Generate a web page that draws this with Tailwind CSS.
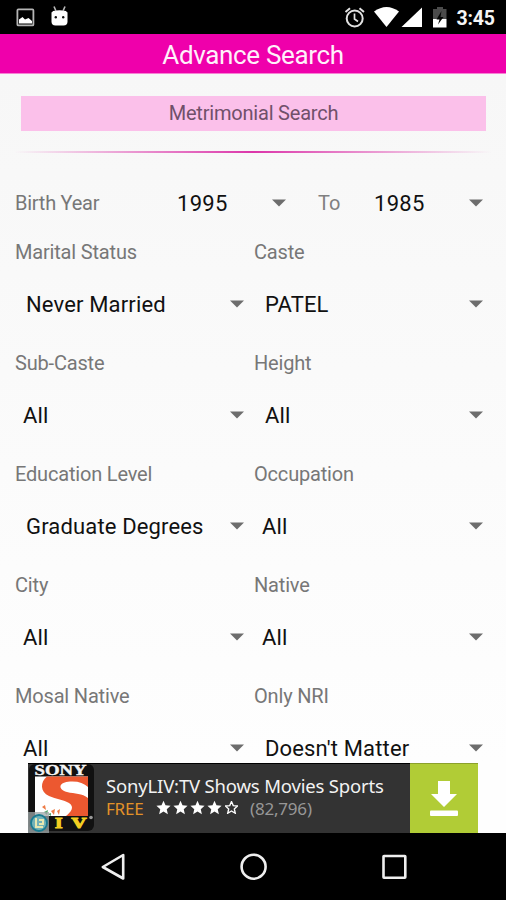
<!DOCTYPE html>
<html lang="en">
<head>
<meta charset="utf-8">
<meta name="viewport" content="width=device-width, initial-scale=1">
<title>Advance Search</title>
<script src="https://cdn.jsdelivr.net/npm/@tailwindcss/browser@4"></script>
</head>
<body class="w-[506px] h-[900px] overflow-hidden bg-black font-['Roboto',sans-serif]">
<svg class="hidden">
  <symbol id="caret" viewBox="0 0 14 8"><path d="M0 0.5H14L7 7.5Z" fill="#6d6d6d"/></symbol>
  <symbol id="star" viewBox="0 0 24 24"><path d="M12 1l3.2 7.5 8.1.7-6.1 5.4 1.8 8L12 18.400l-7 4.200 1.800-8L.7 9.200l8.100-.7z"/></symbol>
</svg>
<div class="flex flex-col h-[900px]">
  <header class="h-[34px] shrink-0 bg-black flex items-center text-white">
    <svg class="w-[506px] h-[34px] shrink-0" viewBox="0 0 506 34">
      <rect x="17.400" y="9.400" width="16" height="16" rx="1" fill="none" stroke="#b5b5b5" stroke-width="1.800"/>
      <path d="M19 23.500V19.500L22.500 17L25 19.500L28.500 18L32 21V23.500Z" fill="#fff"/>
      <path d="M51.500 12.500H67.500V21.500Q67.500 25.500 63.500 25.500H55.500Q51.500 25.500 51.500 21.500Z" fill="#fff"/>
      <path d="M53 11Q59.500 9.500 66 11L67.500 13H51.500Z" fill="#fff"/>
      <path d="M54 6.500L56 11M65 6.500L63 11" stroke="#bbb" stroke-width="1.600"/>
      <circle cx="55.800" cy="17.300" r="1.200" fill="#111"/><circle cx="63.200" cy="17.300" r="1.200" fill="#111"/>
      <g fill="none" stroke="#e2e2e2" stroke-width="2">
        <circle cx="354.700" cy="18.500" r="8"/>
        <path d="M354.500 13.500V19L358 21.500" stroke-width="1.700"/>
        <path d="M345.500 12L350 8.300M364 12L359.500 8.300"/>
      </g>
      <path d="M374 11.500Q386.500 2.500 399 11.500L386.500 27Z" fill="#fff"/>
      <path d="M422 7.500V27H401.500Z" fill="#fff"/>
      <path d="M433 9H437V7H443V9H446.500V19H433Z" fill="#4b4b4b"/>
      <path d="M433 19H446.500V27.500H433Z" fill="#fff"/>
      <path d="M441.500 11L436.500 19.500H439.500L438 24.500L443.500 17H440.500Z" fill="#050505"/>
      <text x="456.500" y="25" font-size="19.500" font-weight="700" fill="#f5f5f5" textLength="38.500">3:45</text>
    </svg>
  </header>
  <h1 class="h-10 shrink-0 bg-[#ef00ab] text-[#fff0fa] text-[26px] tracking-[-0.35px] leading-[43px] text-center border-b border-[#f680d3]">Advance Search</h1>
  <main class="h-[689px] shrink-0 overflow-hidden bg-linear-to-b from-[#f7f7f7] to-[#fefefe] text-[22px] tracking-[0.15px] text-[#111]">
    <div class="mt-[22px] ml-[21px] w-[465px] h-[35px] bg-[#fbc0ea] text-[#70506a] text-[20px] leading-[35px] text-center tracking-[-0.2px]">Metrimonial Search</div>
    <div class="mt-5 mx-[14px] h-[2px] bg-linear-to-r from-[#dc36aa]/0 via-[#dc36aa] to-[#dc36aa]/0"></div>
    <div class="mt-[29px] h-[42px] mb-[8px] flex items-center">
      <span class="ml-[15px] w-[162px] text-[20px] tracking-[-0.25px] text-[#777]">Birth Year</span>
      <span class="w-[95px] tracking-[0.3px]">1995</span>
      <svg class="w-[14px] h-2"><use href="#caret"/></svg>
      <span class="ml-8 w-[56px] text-[20px] text-[#808080]">To</span>
      <span class="w-[95px] tracking-[0.3px]">1985</span>
      <svg class="w-[14px] h-2"><use href="#caret"/></svg>
    </div>
    <div id="fields" class="grid grid-cols-[239px_267px]"></div>
  </main>
  <aside class="h-[70px] shrink-0 bg-[#fefefe] pl-[28px] flex">
    <div class="w-[382px] bg-[#333] border-t border-black flex">
      <svg class="w-[67px] h-[69px] shrink-0" viewBox="0 0 67 69">
        <rect x="1" y="0" width="65" height="67" rx="6" fill="#111"/>
        <text x="6.500" y="11" font-family="Liberation Serif,serif" font-weight="700" font-size="14" textLength="52" lengthAdjust="spacingAndGlyphs" fill="#f5f5f5" stroke="#f5f5f5" stroke-width=".4">SONY</text>
        <rect x="7" y="12.500" width="53" height="39.500" fill="#fff"/>
        <path d="M60 12.500H19C12 18 12 28 21 32C28 35 36 36 41 39C47 43 43 48 38 52H60V34C54 29 47 30 39 28C29 25 31 18 42 17.500C50 17 56 19 60 23Z" fill="#ec5830"/>
        <path d="M14 43l3-2 1 5zM23 47l4-2-1 6zM29 47l3-2-1 6z" fill="#ee7b45"/><path d="M16 48l4-2-1 5zM20 50l3-1v3z" fill="#55a56b"/>
        <g font-family="Liberation Serif,serif" font-weight="700" font-size="14.500" fill="#f3cf21" stroke="#f3cf21" stroke-width="1">
          <text x="27" y="64" textLength="7.500" lengthAdjust="spacingAndGlyphs">I</text>
          <text x="43.500" y="64" textLength="15" lengthAdjust="spacingAndGlyphs">V</text>
        </g>
        <circle cx="63" cy="53.500" r="1.800" fill="#999"/>
        <rect x="0" y="48" width="21" height="21" fill="#9ea7a8" fill-opacity=".75"/>
        <circle cx="11" cy="59" r="8" fill="#72b2b8" stroke="#187b91" stroke-width="1.800"/>
        <path d="M8 54V63H15M11 56H15V60H11" stroke="#e7e8b1" stroke-width="2" fill="none"/>
      </svg>
      <div class="ml-[11px] pt-[8px] text-[#f2f2f2] font-['Noto_Sans',sans-serif]">
        <div class="text-[18.500px] leading-[27px] tracking-[-0.17px] whitespace-nowrap">SonyLIV:TV Shows Movies Sports</div>
        <div class="flex items-center h-[20px] text-[17px] tracking-[-0.2px]">
          <span class="w-[50px] text-[#e29228]">FREE</span>
          <span class="flex gap-[2px] -mt-1">
            <svg class="w-[15px] h-[15px] fill-white"><use href="#star"/></svg>
            <svg class="w-[15px] h-[15px] fill-white"><use href="#star"/></svg>
            <svg class="w-[15px] h-[15px] fill-white"><use href="#star"/></svg>
            <svg class="w-[15px] h-[15px] fill-white"><use href="#star"/></svg>
            <svg class="w-[15px] h-[15px] p-px overflow-visible fill-none stroke-white stroke-[2.500px]"><use href="#star"/></svg>
          </span>
          <span class="ml-[11px] text-[#979797]">(82,796)</span>
        </div>
      </div>
    </div>
    <div class="w-[68px] bg-[#b1cc36] border-t border-[#8ca12c] flex justify-center">
      <svg class="w-[30px] h-[69px]" viewBox="0 0 30 69"><path d="M9 17H21V30H28L15 43L2 30H9Z" fill="#fff"/><rect x="1" y="46.500" width="28" height="5.500" rx="1" fill="#fff"/></svg>
    </div>
  </aside>
  <nav class="h-[67px] shrink-0 bg-black">
    <svg class="w-[506px] h-[67px]" viewBox="0 0 506 67" fill="none" stroke="#efefef" stroke-width="2.600" stroke-linejoin="round">
      <path d="M102.800 34L123.200 22V45.500Z"/>
      <circle cx="253.600" cy="33.700" r="12"/>
      <rect x="383.500" y="23" width="21.800" height="21.800" rx=".5"/>
    </svg>
  </nav>
</div>
<script>
const rows = [
  ["Marital Status", "Never Married", 26, "Caste", "PATEL", 26],
  ["Sub-Caste", "All", 23, "Height", "All", 26],
  ["Education Level", "Graduate Degrees", 26, "Occupation", "All", 23],
  ["City", "All", 23, "Native", "All", 23],
  ["Mosal Native", "All", 23, "Only NRI", "Doesn't Matter", 26]
];
const cell = (label, value, inset) => `
  <div class="h-[111px] w-[253px]">
    <div class="h-10 pl-[15px] flex items-center text-[20px] tracking-[-0.18px] text-[#777]">${label}</div>
    <div class="h-16 flex items-center justify-between pr-[9px]" style="padding-left:${inset}px">
      <span class="whitespace-nowrap">${value}</span>
      <svg class="w-[14px] h-2 shrink-0"><use href="#caret"/></svg>
    </div>
  </div>`;
document.getElementById("fields").innerHTML = rows.map(r => cell(r[0], r[1], r[2]) + cell(r[3], r[4], r[5])).join("");
</script>
</body>
</html>
